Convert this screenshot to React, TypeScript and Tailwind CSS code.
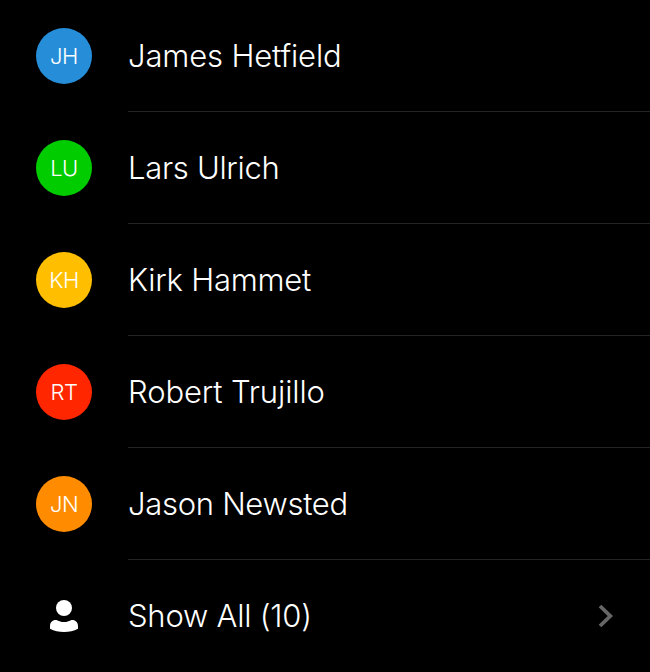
const contacts = [
  { initials: 'JH', name: 'James Hetfield', color: 'bg-[#268ed9]', tracking: 'tracking-[-0.15px]' },
  { initials: 'LU', name: 'Lars Ulrich', color: 'bg-[#00cc00]', tracking: 'tracking-[-0.3px]' },
  { initials: 'KH', name: 'Kirk Hammet', color: 'bg-[#ffbf00]', tracking: 'tracking-[-0.23px]' },
  { initials: 'RT', name: 'Robert Trujillo', color: 'bg-[#ff2600]', tracking: 'tracking-[-0.12px]' },
  { initials: 'JN', name: 'Jason Newsted', color: 'bg-[#ff8c00]', tracking: 'tracking-[-0.3px]' },
];

export default function App() {
  return (
    <main className="h-[672px] w-full overflow-hidden bg-black font-['Inter',sans-serif] font-light text-white">
      {contacts.map((c) => (
        <div key={c.initials} className="flex h-28 items-center pl-9">
          <div className={`flex size-14 shrink-0 items-center justify-center rounded-full text-[22px] tracking-[-0.5px] ${c.color}`}>
            {c.initials}
          </div>
          <div className={`ml-9 flex h-28 flex-1 items-center border-b border-[#252525] pt-px text-[31px] ${c.tracking}`}>
            <span>{c.name}</span>
          </div>
        </div>
      ))}
      <div className="flex h-28 items-center pl-9 pr-9">
        <div className="flex size-14 shrink-0 items-center justify-center">
          <svg width="28" height="32" viewBox="0 0 28 32" fill="white">
            <circle cx="14" cy="8" r="8" />
            <path d="M0 26C0 22.5 2.5 20 5.5 20C8 20 9 22 14 22S20 20 22.5 20C25.5 20 28 22.5 28 26V28.8C24 31 19 32 14 32S4 31 0 28.8Z" />
          </svg>
        </div>
        <span className="ml-9 flex-1 text-[31px] tracking-[-0.22px]">Show All (10)</span>
        <svg width="16" height="24" viewBox="0 0 16 24" fill="none" stroke="#666" strokeWidth="3.8">
          <path d="M2 2L12.3 12L2 22" />
        </svg>
      </div>
    </main>
  );
}
